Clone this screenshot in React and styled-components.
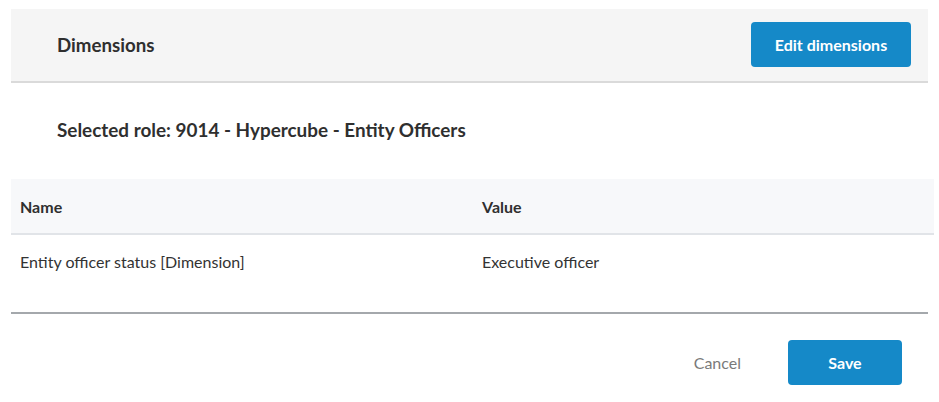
import React from "react";
import styled, { createGlobalStyle } from "styled-components";

const Global = createGlobalStyle`
  html, body { margin: 0; padding: 0; background: #ffffff; }
  body { font-family: Lato, "Open Sans", "Liberation Sans", sans-serif; color: #333333; }
  * { box-sizing: border-box; }
`;

const Page = styled.div`
  width: 939px;
  height: 402px;
  padding: 9px 11px 0 11px;
  display: flex;
  flex-direction: column;
`;

const Header = styled.div`
  height: 74px;
  background: #f5f5f5;
  border-bottom: 2px solid #dadada;
  display: flex;
  align-items: center;
  justify-content: space-between;
  padding: 0 17px 1px 46px;
`;

const Title = styled.h2`
  margin: 0;
  font-size: 18.7px;
  font-weight: 700;
  color: #2f2f2f;
`;

const Button = styled.button`
  height: 45px;
  width: ${(p) => p.$width}px;
  border: none;
  border-radius: 4px;
  background: #1589c8;
  color: #ffffff;
  font-family: inherit;
  font-size: 16px;
  font-weight: 700;
  cursor: pointer;
`;

const Role = styled.div`
  padding: 36px 0 0 46px;
  height: 96px;
  font-size: 18.9px;
  font-weight: 700;
  color: #2f2f2f;
  line-height: 22px;
`;

const Table = styled.div`
  margin-right: -6px;
  display: flex;
  flex-direction: column;
`;

const HeadRow = styled.div`
  display: grid;
  grid-template-columns: 462px 1fr;
  height: 56px;
  background: #f7f8fa;
  border-bottom: 2px solid #e1e4e8;
  align-items: center;
  padding: 0 9px;
  font-size: 16px;
  font-weight: 700;
  color: #2f2f2f;
`;

const BodyRow = styled.div`
  display: grid;
  grid-template-columns: 462px 1fr;
  padding: 17px 9px 0 9px;
  height: 77px;
  font-size: 16px;
  color: #333333;
  line-height: 20px;
`;

const Divider = styled.div`
  height: 2px;
  background: #a4a8ac;
`;

const Footer = styled.div`
  display: flex;
  justify-content: flex-end;
  align-items: center;
  gap: 47px;
  padding: 26px 26px 0 0;
`;

const Link = styled.button`
  background: none;
  border: none;
  padding: 0;
  font-family: inherit;
  font-size: 16px;
  color: #7a7a7a;
  cursor: pointer;
`;

export default function App() {
  return (
    <>
      <Global />
      <Page>
        <Header>
          <Title>Dimensions</Title>
          <Button $width={160}>Edit dimensions</Button>
        </Header>
        <Role>Selected role: 9014 - Hypercube - Entity Officers</Role>
        <Table>
          <HeadRow>
            <span>Name</span>
            <span>Value</span>
          </HeadRow>
          <BodyRow>
            <span>Entity officer status [Dimension]</span>
            <span>Executive officer</span>
          </BodyRow>
        </Table>
        <Divider />
        <Footer>
          <Link>Cancel</Link>
          <Button $width={114}>Save</Button>
        </Footer>
      </Page>
    </>
  );
}
